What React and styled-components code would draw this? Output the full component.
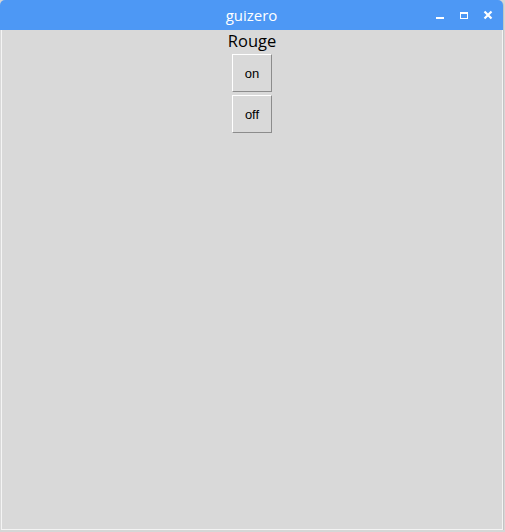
import styled, { createGlobalStyle } from "styled-components"

const Global = createGlobalStyle`
    html, body { margin: 0; padding: 0; background: #d6d6d6; }
    body { font-family: "Liberation Sans", Arial, sans-serif; }
`

export default function App(){
    return (
        <>
            <Global/>
            <Window>
                <TitleBar>
                    <Title>guizero</Title>
                    <Controls>
                        <Ctrl aria-label="minimize">
                            <svg width="10" height="10" viewBox="0 0 10 10">
                                <rect x="1" y="7" width="8" height="2" fill="#fff"/>
                            </svg>
                        </Ctrl>
                        <Ctrl aria-label="maximize">
                            <svg width="10" height="10" viewBox="0 0 10 10">
                                <rect x="1.5" y="2.5" width="7" height="6" fill="none" stroke="#fff" strokeWidth="1"/>
                                <rect x="1" y="2" width="8" height="2" fill="#fff"/>
                            </svg>
                        </Ctrl>
                        <Ctrl aria-label="close">
                            <svg width="10" height="10" viewBox="0 0 10 10">
                                <path d="M1.5 1.5 L8.5 8.5 M8.5 1.5 L1.5 8.5" stroke="#fff" strokeWidth="2.2"/>
                            </svg>
                        </Ctrl>
                    </Controls>
                </TitleBar>
                <Content>
                    <Label>Rouge</Label>
                    <TkButton>on</TkButton>
                    <TkButton>off</TkButton>
                </Content>
            </Window>
        </>
    )
}

const Window = styled.div`
    width: 503px;
    height: 530px;
    display: flex;
    flex-direction: column;
    background: #d9d9d9;
    border-radius: 5px 5px 0 0;
    overflow: hidden;
    box-shadow: 1px 1px 0 #c4c4c4;
`

const TitleBar = styled.div`
    position: relative;
    height: 30px;
    flex: none;
    background: #4d98f5;
    display: flex;
    align-items: center;
    justify-content: center;
`

const Title = styled.div`
    color: #ffffff;
    font-family: "Open Sans", "DejaVu Sans", sans-serif;
    font-size: 15px;
    line-height: 30px;
`

const Controls = styled.div`
    position: absolute;
    right: 10px;
    top: 10px;
    display: flex;
    gap: 14px;
`

const Ctrl = styled.div`
    width: 10px;
    height: 10px;
    display: flex;
`

const Content = styled.div`
    flex: 1;
    margin: 0 0 0 1px;
    border-left: 1px solid #f4f4f4;
    border-right: 1px solid #f4f4f4;
    border-bottom: 1px solid #f4f4f4;
    display: flex;
    flex-direction: column;
    align-items: center;
    gap: 3px;
`

const Label = styled.div`
    font-family: "Open Sans", "DejaVu Sans", sans-serif;
    font-size: 16.5px;
    line-height: 21px;
    color: #000;
`

const TkButton = styled.button`
    width: 40px;
    height: 38px;
    padding: 0;
    background: #d9d9d9;
    border: 1px solid;
    border-color: #ffffff #8c8c8c #8c8c8c #ffffff;
    font-family: "Liberation Sans", "DejaVu Sans", sans-serif;
    font-size: 13px;
    color: #000;
`
